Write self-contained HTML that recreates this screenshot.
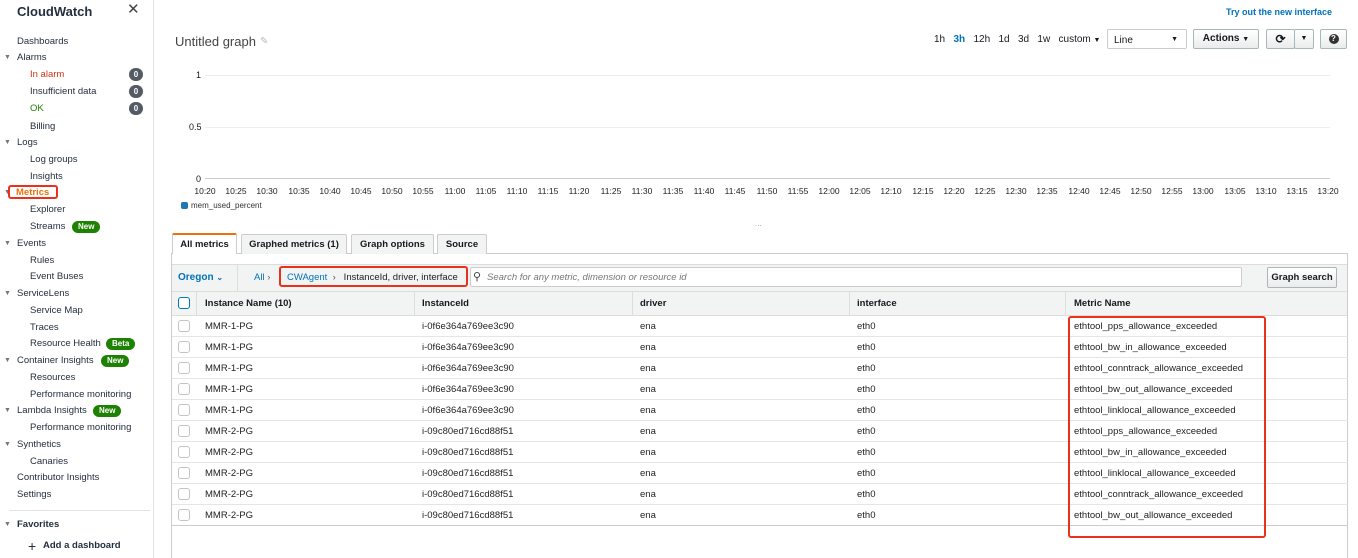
<!DOCTYPE html>
<html><head><meta charset="utf-8"><style>
*{box-sizing:border-box;margin:0;padding:0}
body{width:1358px;height:558px;overflow:hidden;background:#fff;font-family:"Liberation Sans",Arial,sans-serif;color:#16191f;position:relative;font-size:10px}
.a{position:absolute;white-space:nowrap}
.sb{position:absolute;left:0;top:0;width:154px;height:558px;border-right:1px solid #e3e3e3}
.sb .a{font-size:9.5px;color:#232f3e}
.tri{position:absolute;font-size:7px;color:#777}
.cnt{position:absolute;left:129px;width:14px;height:13px;border-radius:7px;background:#545b64;color:#fff;font-size:8px;font-weight:bold;text-align:center;line-height:13px}
.badge{position:absolute;height:12px;border-radius:6px;background:#1d8102;color:#fff;font-size:8px;font-weight:bold;line-height:12px;padding:0 6px}
.tl{position:absolute;top:186px;font-size:8.5px;transform:translateX(-50%);color:#222}
.btn{position:absolute;border:1px solid #aab7b8;border-radius:2px;background:linear-gradient(#fff,#eaeded);font-weight:bold;font-size:10px;text-align:center}
.tab{position:absolute;top:234px;height:20px;border:1px solid #ccc;border-bottom:none;background:#f2f3f3;font-weight:bold;font-size:9.5px;text-align:center;line-height:19px;border-radius:2px 2px 0 0}
.row{position:absolute;left:172px;width:1176px;height:21px;border-bottom:1px solid #e5e5e5;font-size:9.5px;color:#222}
.row span{position:absolute;top:5px}
.cb{position:absolute;left:6px;top:4px;width:12px;height:12px;border:1px solid #c5c5c5;border-radius:3px;background:#fff}
</style></head><body>
<div class="sb">
<div class="a" style="left:17px;top:4px;font-size:13px;font-weight:bold">CloudWatch</div>
<div class="a" style="left:127px;top:0px;font-size:15px;color:#444">✕</div>
<div class="a" style="left:17px;top:36px">Dashboards</div>
<div class="tri" style="left:4px;top:54px">▼</div><div class="a" style="left:17px;top:52px">Alarms</div>
<div class="a" style="left:30px;top:69px;color:#d13212">In alarm</div><div class="cnt" style="top:68px">0</div>
<div class="a" style="left:30px;top:86px">Insufficient data</div><div class="cnt" style="top:85px">0</div>
<div class="a" style="left:30px;top:103px;color:#1d8102">OK</div><div class="cnt" style="top:102px">0</div>
<div class="a" style="left:30px;top:121px">Billing</div>
<div class="tri" style="left:4px;top:139px">▼</div><div class="a" style="left:17px;top:137px">Logs</div>
<div class="a" style="left:30px;top:154px">Log groups</div>
<div class="a" style="left:30px;top:171px">Insights</div>
<div class="tri" style="left:4px;top:189px">▼</div>
<div class="a" style="left:8px;top:185px;width:50px;height:14px;border:2px solid #e8321c;border-radius:3px"></div>
<div class="a" style="left:16px;top:187px;color:#ec7211;font-weight:bold">Metrics</div>
<div class="a" style="left:30px;top:204px">Explorer</div>
<div class="a" style="left:30px;top:221px">Streams</div><div class="badge" style="left:72px;top:221px">New</div>
<div class="tri" style="left:4px;top:240px">▼</div><div class="a" style="left:17px;top:238px">Events</div>
<div class="a" style="left:30px;top:255px">Rules</div>
<div class="a" style="left:30px;top:271px">Event Buses</div>
<div class="tri" style="left:4px;top:290px">▼</div><div class="a" style="left:17px;top:288px">ServiceLens</div>
<div class="a" style="left:30px;top:305px">Service Map</div>
<div class="a" style="left:30px;top:322px">Traces</div>
<div class="a" style="left:30px;top:338px">Resource Health</div><div class="badge" style="left:106px;top:338px">Beta</div>
<div class="tri" style="left:4px;top:357px">▼</div><div class="a" style="left:17px;top:355px">Container Insights</div><div class="badge" style="left:101px;top:355px">New</div>
<div class="a" style="left:30px;top:372px">Resources</div>
<div class="a" style="left:30px;top:389px">Performance monitoring</div>
<div class="tri" style="left:4px;top:407px">▼</div><div class="a" style="left:17px;top:405px">Lambda Insights</div><div class="badge" style="left:93px;top:405px">New</div>
<div class="a" style="left:30px;top:422px">Performance monitoring</div>
<div class="tri" style="left:4px;top:441px">▼</div><div class="a" style="left:17px;top:439px">Synthetics</div>
<div class="a" style="left:30px;top:456px">Canaries</div>
<div class="a" style="left:17px;top:472px">Contributor Insights</div>
<div class="a" style="left:17px;top:489px">Settings</div>
<div class="a" style="left:9px;top:510px;width:141px;border-top:1px solid #e3e3e3"></div>
<div class="tri" style="left:4px;top:521px">▼</div><div class="a" style="left:17px;top:519px;font-weight:bold">Favorites</div>
<div class="a" style="left:28px;top:538px;font-size:14px">+</div><div class="a" style="left:43px;top:540px;font-weight:bold">Add a dashboard</div>
</div>

<div class="a" style="left:1226px;top:7px;color:#0073bb;font-weight:bold;font-size:9px">Try out the new interface</div>
<div class="a" style="left:175px;top:34px;font-size:13px;color:#444">Untitled graph</div>
<div class="a" style="left:260px;top:36px;font-size:10px;color:#bbb">✎</div>
<div class="a" style="left:934px;top:34px;font-size:10px">1h&nbsp;&nbsp; <span style="color:#0073bb;font-weight:bold">3h</span>&nbsp;&nbsp; 12h&nbsp;&nbsp; 1d&nbsp;&nbsp; 3d&nbsp;&nbsp; 1w&nbsp;&nbsp; custom <span style="font-size:7px">▼</span></div>
<div class="a" style="left:1107px;top:29px;width:80px;height:20px;border:1px solid #ccc;border-radius:2px;padding:5px 6px;font-size:10px">Line<span style="position:absolute;right:8px;top:6px;font-size:7px">▼</span></div>
<div class="btn" style="left:1193px;top:29px;width:66px;height:20px;line-height:18px">Actions <span style="font-size:7px">▼</span></div>
<div class="btn" style="left:1266px;top:29px;width:29px;height:20px;line-height:18px;font-size:12px">⟳</div>
<div class="btn" style="left:1294px;top:29px;width:20px;height:20px;line-height:18px;font-size:7px">▼</div>
<div class="btn" style="left:1320px;top:29px;width:27px;height:20px;line-height:18px"><span style="display:inline-block;width:10px;height:10px;border-radius:5px;background:#333;color:#fff;font-size:8px;line-height:10px">?</span></div>

<div class="a" style="left:196px;top:70px;font-size:9px">1</div>
<div class="a" style="left:189px;top:122px;font-size:9px">0.5</div>
<div class="a" style="left:196px;top:174px;font-size:9px">0</div>
<div class="a" style="left:205px;top:75px;width:1125px;border-top:1px solid #eee"></div>
<div class="a" style="left:205px;top:127px;width:1125px;border-top:1px solid #eee"></div>
<div class="a" style="left:205px;top:178px;width:1125px;border-top:1px solid #ccc"></div>
<div class="tl" style="left:205px">10:20</div><div class="tl" style="left:236px">10:25</div><div class="tl" style="left:267px">10:30</div><div class="tl" style="left:299px">10:35</div><div class="tl" style="left:330px">10:40</div><div class="tl" style="left:361px">10:45</div><div class="tl" style="left:392px">10:50</div><div class="tl" style="left:423px">10:55</div><div class="tl" style="left:455px">11:00</div><div class="tl" style="left:486px">11:05</div><div class="tl" style="left:517px">11:10</div><div class="tl" style="left:548px">11:15</div><div class="tl" style="left:579px">11:20</div><div class="tl" style="left:611px">11:25</div><div class="tl" style="left:642px">11:30</div><div class="tl" style="left:673px">11:35</div><div class="tl" style="left:704px">11:40</div><div class="tl" style="left:735px">11:45</div><div class="tl" style="left:767px">11:50</div><div class="tl" style="left:798px">11:55</div><div class="tl" style="left:829px">12:00</div><div class="tl" style="left:860px">12:05</div><div class="tl" style="left:891px">12:10</div><div class="tl" style="left:923px">12:15</div><div class="tl" style="left:954px">12:20</div><div class="tl" style="left:985px">12:25</div><div class="tl" style="left:1016px">12:30</div><div class="tl" style="left:1047px">12:35</div><div class="tl" style="left:1079px">12:40</div><div class="tl" style="left:1110px">12:45</div><div class="tl" style="left:1141px">12:50</div><div class="tl" style="left:1172px">12:55</div><div class="tl" style="left:1203px">13:00</div><div class="tl" style="left:1235px">13:05</div><div class="tl" style="left:1266px">13:10</div><div class="tl" style="left:1297px">13:15</div><div class="tl" style="left:1328px">13:20</div>
<div class="a" style="left:181px;top:202px;width:7px;height:7px;background:#1f77b4;border-radius:2px"></div>
<div class="a" style="left:191px;top:201px;font-size:8px;color:#333">mem_used_percent</div>
<div class="a" style="left:755px;top:219px;font-size:8px;color:#999">...</div>

<div class="a" style="left:171px;top:253px;width:1177px;height:305px;border:1px solid #ccc;border-bottom:none"></div>
<div class="tab" style="left:172px;top:233px;height:21px;width:65px;background:#fff;border-top:2px solid #ec7211">All metrics</div>
<div class="tab" style="left:241px;width:106px">Graphed metrics (1)</div>
<div class="tab" style="left:351px;width:83px">Graph options</div>
<div class="tab" style="left:437px;width:50px">Source</div>
<div class="a" style="left:172px;top:264px;width:1175px;height:28px;background:#f2f3f3;border-top:1px solid #ddd;border-bottom:1px solid #ddd"></div>
<div class="a" style="left:237px;top:264px;height:28px;border-left:1px solid #ddd"></div>
<div class="a" style="left:178px;top:272px;color:#0073bb;font-weight:bold">Oregon <span style="font-size:8px">⌄</span></div>
<div class="a" style="left:254px;top:272px;color:#0073bb;font-size:9.5px">All <span style="color:#666">›</span></div>
<div class="a" style="left:279px;top:266px;width:189px;height:21px;border:2px solid #e8321c;border-radius:3px"></div>
<div class="a" style="left:287px;top:272px;color:#0073bb;font-size:9.5px">CWAgent <span style="color:#555">&nbsp;›</span><span style="color:#222">&nbsp;&nbsp;&nbsp;InstanceId, driver, interface</span></div>
<div class="a" style="left:470px;top:267px;width:772px;height:20px;background:#fff;border:1px solid #ccc;border-radius:2px"></div>
<div class="a" style="left:473px;top:270px;font-size:11px;color:#444">⚲</div>
<div class="a" style="left:487px;top:272px;font-style:italic;color:#777;font-size:9.5px">Search for any metric, dimension or resource id</div>
<div class="btn" style="left:1267px;top:267px;width:70px;height:21px;line-height:19px;font-size:9.5px">Graph search</div>

<div class="a" style="left:172px;top:292px;width:1175px;height:24px;background:#f2f3f3;border-bottom:1px solid #ddd;font-weight:bold;font-size:9.5px">
<div class="a" style="left:6px;top:5px;width:12px;height:12px;border:1.5px solid #0073bb;border-radius:3px;background:#fff"></div>
<div class="a" style="left:24px;top:0;height:24px;border-left:1px solid #ddd"></div><span class="a" style="left:33px;top:6px">Instance Name (10)</span>
<div class="a" style="left:242px;top:0;height:24px;border-left:1px solid #ddd"></div><span class="a" style="left:250px;top:6px">InstanceId</span>
<div class="a" style="left:460px;top:0;height:24px;border-left:1px solid #ddd"></div><span class="a" style="left:468px;top:6px">driver</span>
<div class="a" style="left:677px;top:0;height:24px;border-left:1px solid #ddd"></div><span class="a" style="left:685px;top:6px">interface</span>
<div class="a" style="left:893px;top:0;height:24px;border-left:1px solid #ddd"></div><span class="a" style="left:902px;top:6px">Metric Name</span>
</div>

<div class="row" style="top:316px"><div class="cb"></div><span style="left:33px">MMR-1-PG</span><span style="left:250px">i-0f6e364a769ee3c90</span><span style="left:468px">ena</span><span style="left:685px">eth0</span><span style="left:902px">ethtool_pps_allowance_exceeded</span></div>
<div class="row" style="top:337px"><div class="cb"></div><span style="left:33px">MMR-1-PG</span><span style="left:250px">i-0f6e364a769ee3c90</span><span style="left:468px">ena</span><span style="left:685px">eth0</span><span style="left:902px">ethtool_bw_in_allowance_exceeded</span></div>
<div class="row" style="top:358px"><div class="cb"></div><span style="left:33px">MMR-1-PG</span><span style="left:250px">i-0f6e364a769ee3c90</span><span style="left:468px">ena</span><span style="left:685px">eth0</span><span style="left:902px">ethtool_conntrack_allowance_exceeded</span></div>
<div class="row" style="top:379px"><div class="cb"></div><span style="left:33px">MMR-1-PG</span><span style="left:250px">i-0f6e364a769ee3c90</span><span style="left:468px">ena</span><span style="left:685px">eth0</span><span style="left:902px">ethtool_bw_out_allowance_exceeded</span></div>
<div class="row" style="top:400px"><div class="cb"></div><span style="left:33px">MMR-1-PG</span><span style="left:250px">i-0f6e364a769ee3c90</span><span style="left:468px">ena</span><span style="left:685px">eth0</span><span style="left:902px">ethtool_linklocal_allowance_exceeded</span></div>
<div class="row" style="top:421px"><div class="cb"></div><span style="left:33px">MMR-2-PG</span><span style="left:250px">i-09c80ed716cd88f51</span><span style="left:468px">ena</span><span style="left:685px">eth0</span><span style="left:902px">ethtool_pps_allowance_exceeded</span></div>
<div class="row" style="top:442px"><div class="cb"></div><span style="left:33px">MMR-2-PG</span><span style="left:250px">i-09c80ed716cd88f51</span><span style="left:468px">ena</span><span style="left:685px">eth0</span><span style="left:902px">ethtool_bw_in_allowance_exceeded</span></div>
<div class="row" style="top:463px"><div class="cb"></div><span style="left:33px">MMR-2-PG</span><span style="left:250px">i-09c80ed716cd88f51</span><span style="left:468px">ena</span><span style="left:685px">eth0</span><span style="left:902px">ethtool_linklocal_allowance_exceeded</span></div>
<div class="row" style="top:484px"><div class="cb"></div><span style="left:33px">MMR-2-PG</span><span style="left:250px">i-09c80ed716cd88f51</span><span style="left:468px">ena</span><span style="left:685px">eth0</span><span style="left:902px">ethtool_conntrack_allowance_exceeded</span></div>
<div class="row" style="top:505px;border-bottom-color:#ccc"><div class="cb"></div><span style="left:33px">MMR-2-PG</span><span style="left:250px">i-09c80ed716cd88f51</span><span style="left:468px">ena</span><span style="left:685px">eth0</span><span style="left:902px">ethtool_bw_out_allowance_exceeded</span></div>

<div class="a" style="left:1068px;top:316px;width:198px;height:222px;border:2px solid #e8321c;border-radius:3px"></div>
</body></html>
